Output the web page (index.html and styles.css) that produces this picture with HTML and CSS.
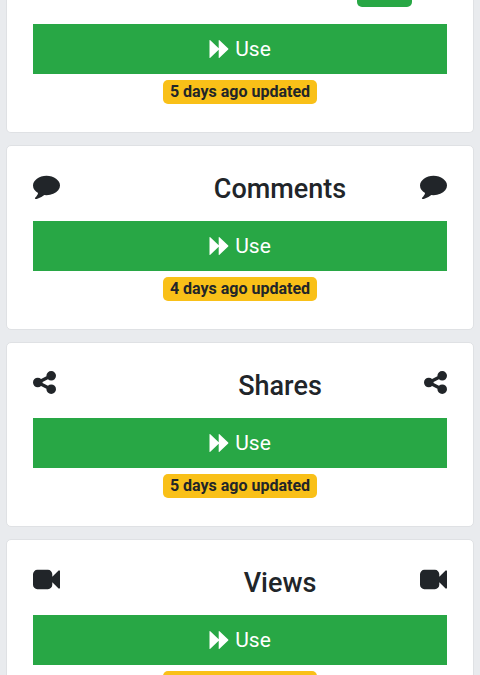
FILE: index.html
```
<!DOCTYPE html>
<html lang="en">
<head>
<meta charset="utf-8">
<meta name="viewport" content="width=device-width, initial-scale=1">
<title>Tools</title>
<link rel="stylesheet" href="styles.css">
</head>
<body>
<svg class="sprite" aria-hidden="true">
  <symbol id="comment" viewBox="0 0 1792 1792"><path d="M1792 896q0 174-120 321.500t-326 233-450 85.500q-70 0-145-8-198 175-460 242-49 14-114 22h-5q-15 0-27-10.500t-16-27.500v-1q-3-4-.5-12t2-10 4.500-9.500l6-9 7-8.500 8-9q7-8 31-34.500t34.500-38 31-39.500 32.500-51 27-59 26-76q-157-89-247.500-220t-90.500-281q0-130 71-248.500t191-204.500 286-136.500 348-50.500 348 50.500 286 136.500 191 204.500 71 248.500z"/></symbol>
  <symbol id="share" viewBox="128 0 1536 1792"><path d="M1344 1024q133 0 226.500 93.500t93.500 226.500-93.500 226.500-226.500 93.500-226.500-93.500-93.500-226.500q0-12 2-34l-360-180q-92 86-218 86-133 0-226.500-93.500t-93.500-226.500 93.500-226.500 226.500-93.500q126 0 218 86l360-180q-2-22-2-34 0-133 93.500-226.500t226.500-93.500 226.500 93.500 93.500 226.500-93.500 226.500-226.500 93.500q-126 0-218-86l-360 180q2 22 2 34t-2 34l360 180q92-86 218-86z"/></symbol>
  <symbol id="video" viewBox="0 0 1792 1792"><path d="M1792 352v1088q0 42-39 59-13 5-25 5-27 0-45-19l-403-403v166q0 119-84.500 203.500t-203.500 84.500h-704q-119 0-203.500-84.500t-84.500-203.500v-704q0-119 84.500-203.500t203.500-84.500h704q119 0 203.500 84.500t84.500 203.500v165l403-402q18-19 45-19 12 0 25 5 39 17 39 59z"/></symbol>
  <symbol id="forward" viewBox="0 0 20 20"><path d="M.5 1.500Q.5.500 1.300 1.200L9.700 9.300V1.500Q9.700.500 10.500 1.200L19.200 9.500Q19.700 10 19.200 10.500L10.500 18.800Q9.700 19.500 9.700 18.500V10.700L1.300 18.800Q.5 19.500.5 18.500Z"/></symbol>
</svg>
<main class="cards">
  <section class="card card-first">
    <div class="card-status"><span class="status"></span></div>
    <button class="use" type="button"><svg class="forward"><use href="#forward"/></svg>Use</button>
    <span class="updated">5 days ago updated</span>
  </section>
  <section class="card">
    <header class="card-head">
      <svg class="icon"><use href="#comment"/></svg>
      <h2 class="title">Comments</h2>
      <svg class="icon"><use href="#comment"/></svg>
    </header>
    <button class="use" type="button"><svg class="forward"><use href="#forward"/></svg>Use</button>
    <span class="updated">4 days ago updated</span>
  </section>
  <section class="card">
    <header class="card-head">
      <svg class="icon icon-narrow"><use href="#share"/></svg>
      <h2 class="title">Shares</h2>
      <svg class="icon icon-narrow"><use href="#share"/></svg>
    </header>
    <button class="use" type="button"><svg class="forward"><use href="#forward"/></svg>Use</button>
    <span class="updated">5 days ago updated</span>
  </section>
  <section class="card">
    <header class="card-head">
      <svg class="icon"><use href="#video"/></svg>
      <h2 class="title">Views</h2>
      <svg class="icon"><use href="#video"/></svg>
    </header>
    <button class="use" type="button"><svg class="forward"><use href="#forward"/></svg>Use</button>
    <span class="updated">5 days ago updated</span>
  </section>
</main>
</body>
</html>
```
FILE: styles.css
```
* {
  box-sizing: border-box;
}

html {
  scrollbar-width: none;
}

body {
  margin: 0;
  background: #e9ebee;
  color: #212529;
  font-family: Roboto, "Liberation Sans", sans-serif;
}

.sprite {
  display: none;
}

.cards {
  display: flex;
  flex-direction: column;
  gap: 12px;
  padding: 0 6px 12px;
}

.card {
  display: flex;
  flex-direction: column;
  align-items: center;
  padding: 26px 26px 28px;
  border: 1px solid #dfe1e4;
  border-radius: 5px;
  background: #fff;
}

.card-first {
  padding-top: 0;
  border-top: 0;
  border-radius: 0 0 5px 5px;
}

.card-status {
  display: flex;
  justify-content: flex-end;
  align-self: stretch;
  height: 24px;
  padding-right: 35px;
}

.status {
  width: 55px;
  height: 7px;
  border-radius: 0 0 5px 5px;
  background: #28a745;
}

.card-head {
  display: flex;
  align-self: stretch;
  margin-bottom: 15px;
}

.icon {
  flex: none;
  width: 27px;
  height: 27px;
  fill: currentColor;
}

.icon-narrow {
  width: 23px;
}

.title {
  flex: 1;
  margin: 0;
  padding-left: 80px;
  font-size: 27px;
  font-weight: 500;
  line-height: 34px;
  text-align: center;
}

.use {
  display: flex;
  align-items: center;
  justify-content: center;
  gap: 6px;
  width: 100%;
  height: 50px;
  margin: 0 0 6px;
  padding: 0;
  border: 0;
  background: #28a745;
  color: #fff;
  font-family: inherit;
  font-size: 21px;
  line-height: 32px;
}

.forward {
  width: 20px;
  height: 20px;
  fill: currentColor;
}

.updated {
  padding: 0 7px;
  border-radius: 5px;
  background: #f9c018;
  color: #212529;
  font-size: 16px;
  font-weight: 700;
  line-height: 24px;
}
```
